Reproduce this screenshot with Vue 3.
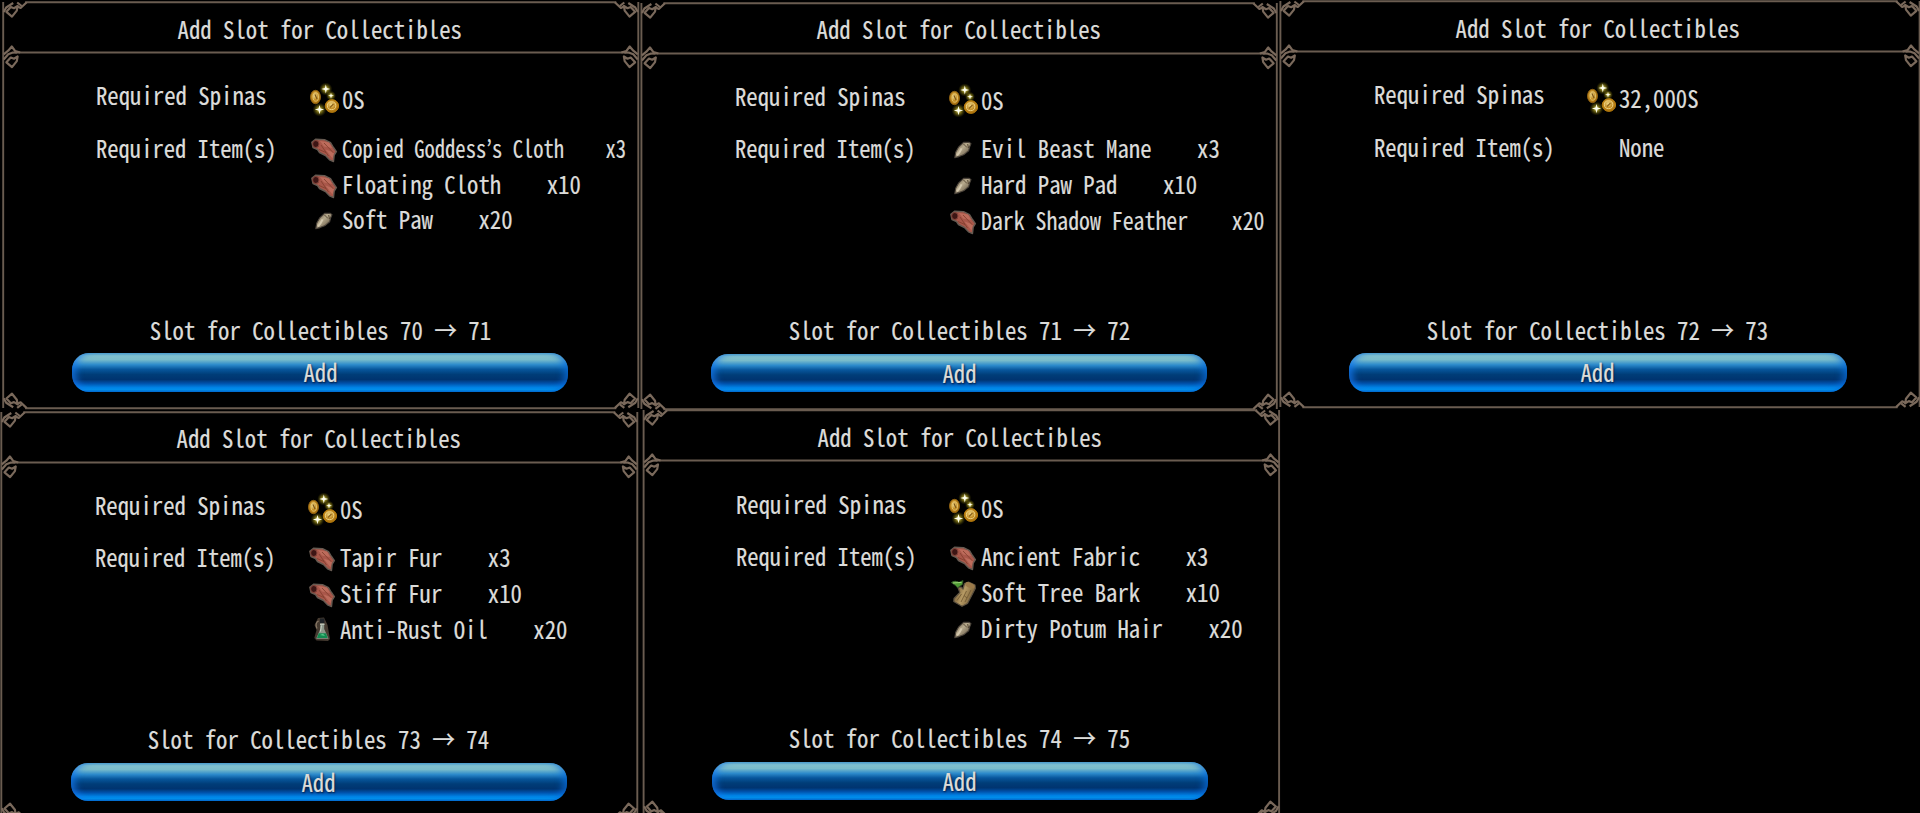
<template>
  <div class="board">
    <svg class="defs" width="0" height="0">
      <defs>
        <g id="loop">
          <path d="M3.2 9.8 L7.6 5 L10.8 6.2 L14.4 4 L13.6 8.6 L8.8 14.6 Z" />
        </g>
        <g id="corner">
          <use href="#loop" />
          <path d="M0.5 10 L3 5.5 L10 1" />
          <path d="M13.5 4 L17.4 6 L23.5 0.2" />
          <path d="M14 0.5 L18.5 4" />
        </g>
        <g id="joint">
          <use href="#loop" />
          <path d="M0.5 1.8 L5 -1.8 L8.6 -6 L12 -1.4 L17 0" />
          <path d="M0.5 7 L5 1.8 L9 0.2 L14 0" />
        </g>
        <radialGradient id="gold" cx="0.45" cy="0.4" r="0.6">
          <stop offset="0" stop-color="#f2dc8c" />
          <stop offset="0.5" stop-color="#c58f26" />
          <stop offset="1" stop-color="#a96f0c" />
        </radialGradient>
        <radialGradient id="glow">
          <stop offset="0" stop-color="#ffff9c" stop-opacity="0.95" />
          <stop offset="0.45" stop-color="#b5a520" stop-opacity="0.6" />
          <stop offset="1" stop-color="#6b6000" stop-opacity="0" />
        </radialGradient>
        <linearGradient id="bone" x1="0" y1="0.2" x2="0.8" y2="1">
          <stop offset="0" stop-color="#6a5c4a" />
          <stop offset="0.4" stop-color="#b8ab8e" />
          <stop offset="1" stop-color="#5c4f3d" />
        </linearGradient>
        <linearGradient id="wood" x1="0" y1="0.3" x2="1" y2="0.7">
          <stop offset="0" stop-color="#6d5530" />
          <stop offset="0.45" stop-color="#b69a64" />
          <stop offset="1" stop-color="#6a512d" />
        </linearGradient>
      </defs>
    </svg>

    <div v-for="(row, r) in rows" :key="r" class="row">
      <section v-for="panel in row" :key="panel.from" :class="['panel', 'panel-' + panel.from]">
        <svg class="frame" width="644" height="412">
          <path :d="framePath(panel)" />
          <g class="ornament">
            <use href="#corner" :transform="`translate(${panel.left} 2)`" />
            <use href="#corner" :transform="`translate(${panel.right} 2) scale(-1 1)`" />
            <use href="#joint" :transform="`translate(${panel.left} 52.5)`" />
            <use href="#joint" :transform="`translate(${panel.right} 52.5) scale(-1 1)`" />
            <use href="#corner" :transform="`translate(${panel.left} 408.3) scale(1 -1)`" />
            <use href="#corner" :transform="`translate(${panel.right} 408.3) scale(-1 -1)`" />
          </g>
        </svg>

        <h2 class="title"><span class="text">Add Slot for Collectibles</span></h2>

        <div class="spinas">
          <span class="label text">Required Spinas</span>
          <div class="value">
            <svg class="icon" viewBox="0 0 34 36">
              <ellipse cx="7.5" cy="17" rx="5" ry="6.7" fill="url(#gold)" stroke="#8d6012" />
              <ellipse cx="7.8" cy="17" rx="2.7" ry="4.2" fill="none" stroke="#e6cb7c" stroke-width="0.8" />
              <path d="M7 14.5 L9 19" stroke="#7b551a" stroke-width="1.2" />
              <ellipse cx="23.9" cy="26" rx="6.7" ry="6.4" fill="url(#gold)" stroke="#b57a0a" />
              <ellipse cx="23.6" cy="25.7" rx="4.2" ry="3.9" fill="none" stroke="#f0d98c" stroke-width="0.9" />
              <path d="M22 27.5 L25.5 24" stroke="#8b611a" stroke-width="1.3" />
              <circle cx="17.8" cy="9" r="6.6" fill="url(#glow)" />
              <circle cx="23" cy="15.7" r="5" fill="url(#glow)" />
              <circle cx="11.5" cy="29.6" r="7" fill="url(#glow)" />
              <path class="spark" d="M17.8 4.5 L18.7 8.1 L22.3 9 L18.7 9.9 L17.8 13.5 L16.9 9.9 L13.3 9 L16.9 8.1 Z" />
              <path class="spark" d="M23 12.7 L23.6 15.1 L26 15.7 L23.6 16.3 L23 18.7 L22.4 16.3 L20 15.7 L22.4 15.1 Z" />
              <path class="spark" d="M11.5 24.9 L12.5 28.6 L16.2 29.6 L12.5 30.6 L11.5 34.3 L10.5 30.6 L6.8 29.6 L10.5 28.6 Z" />
            </svg>
            <span class="text">{{ panel.spinas }}S</span>
          </div>
        </div>

        <div class="items">
          <span class="label text">Required Item(s)</span>
          <ul class="list">
            <li v-if="!panel.items.length" class="value none"><span class="text">None</span></li>
            <li v-for="item in panel.items" :key="item.name" class="value">
              <svg class="icon" viewBox="0 0 34 36">
                <template v-if="item.icon === 'cloth'">
                  <path d="M3.8 12.2 L7.5 9.2 L16.5 9.6 L22.5 12.7 L25.5 17.5 L28.4 21.6 L26.2 25 L25.5 31.5 L21.5 29.8 L17.5 25.5 L11.5 22.5 L9.5 19.5 L5 17.6 Z" fill="#a9574a" stroke="#665a51" stroke-width="1.4" stroke-linejoin="round" />
                  <path d="M12 11 L21 12.5 L24 18 L16 16.5 Z M17.5 19.5 L26 22.5 L24.5 28.5 Z" fill="#bd6c5c" />
                  <path d="M13 15 L20.5 26 M16 13 L25.5 23 M11 19.5 L18 22.5" fill="none" stroke="#84402f" stroke-width="0.9" />
                  <ellipse cx="7.8" cy="14" rx="3.2" ry="3.5" fill="#3d1514" stroke="#84443a" />
                </template>
                <template v-else-if="item.icon === 'paw'">
                  <path d="M24 13.6 L22 12.2 L16.6 12.4 L11.8 16.8 L8.8 22 L7.8 27.6 L12 26.6 L17.2 24.4 L21.6 20.8 L22.6 17 Z" fill="url(#bone)" stroke="#4c443b" stroke-width="1.1" stroke-linejoin="round" />
                  <path d="M10 25.4 Q12.8 22.6 14.6 18.4" fill="none" stroke="#d3c8ae" stroke-width="2" />
                  <path d="M16.5 14 L20 17.5 M20.6 14 L21.6 18" fill="none" stroke="#51432f" stroke-width="0.9" />
                </template>
                <template v-else-if="item.icon === 'flask'">
                  <path d="M12 7 L18 6.5 L21.5 14 L24 28 L22 30 L10.5 29.5 L8.3 27 L10.5 19 L8.5 14 Z" fill="#453a30" />
                  <path d="M12.6 10 Q8.6 12 11 17.5" fill="none" stroke="#8a7b68" stroke-width="1.1" />
                  <path d="M14.3 12.5 H18.2 V18 L22.6 27.8 H10.2 L14.3 18 Z" fill="#8d988b" />
                  <path d="M12.7 22.2 H20 L21.7 26.9 H11 Z" fill="#128a50" />
                  <path d="M14 24 L17 22.8 L19 25 Z" fill="#52c886" />
                  <path d="M14 7.5 H18.4 V12 H14 Z" fill="#1e2226" />
                  <path d="M14 13.3 H18.5" stroke="#c3c9bd" stroke-width="1.2" />
                  <path d="M15.4 14.5 L14.5 20.5" stroke="#d5dccf" stroke-width="0.9" />
                </template>
                <template v-else>
                  <path d="M17.5 9.5 L21.5 8 L28 11 L28.3 14.5 L20.5 29.5 L15 32.3 L6.8 27.6 L7 24.5 L12.8 18.5 L11 13.5 L14 13 L16 15 Z" fill="url(#wood)" stroke="#5c5140" stroke-width="1.2" stroke-linejoin="round" />
                  <ellipse cx="23" cy="11.3" rx="5" ry="2.6" fill="#9b7a4a" transform="rotate(22 23 11.3)" />
                  <path d="M14.5 20 L10 26.5 M19.5 17 L14 28 M24 16 L18 28 M17 21.5 L20 24" fill="none" stroke="#6d5530" stroke-width="0.8" />
                  <path d="M4.3 8.6 Q8 5.8 12 8.3 L16 6.5 L15.4 10.5 L10.5 13.8 L8.6 11.6 Z" fill="#4e9a33" stroke="#33552a" stroke-width="0.8" />
                  <path d="M6 9 L14.5 8.4" stroke="#9bd375" stroke-width="1" />
                </template>
              </svg>
              <span class="text" :style="{ transform: `scaleX(${fit(item)})` }">{{ line(item) }}</span>
            </li>
          </ul>
        </div>

        <p class="slots"><span class="text">Slot for Collectibles {{ panel.from }} → {{ panel.from + 1 }}</span></p>
        <button class="add"><span class="text">Add</span></button>
      </section>
    </div>
  </div>
</template>

<script setup>
const rows = [
  [
    {
      from: 70, spinas: '0', left: 3.2, right: 638.3,
      items: [
        { icon: 'cloth', name: 'Copied Goddess’s Cloth', count: 3 },
        { icon: 'cloth', name: 'Floating Cloth', count: 10 },
        { icon: 'paw', name: 'Soft Paw', count: 20 }
      ]
    },
    {
      from: 71, spinas: '0', left: 2.4, right: 637.8,
      items: [
        { icon: 'paw', name: 'Evil Beast Mane', count: 3 },
        { icon: 'paw', name: 'Hard Paw Pad', count: 10 },
        { icon: 'cloth', name: 'Dark Shadow Feather', count: 20 }
      ]
    },
    { from: 72, spinas: '32,000', left: 2.4, right: 641.6, items: [] }
  ],
  [
    {
      from: 73, spinas: '0', left: 2.3, right: 638.3,
      items: [
        { icon: 'cloth', name: 'Tapir Fur', count: 3 },
        { icon: 'cloth', name: 'Stiff Fur', count: 10 },
        { icon: 'flask', name: 'Anti-Rust Oil', count: 20 }
      ]
    },
    {
      from: 74, spinas: '0', left: 3.6, right: 639.1,
      items: [
        { icon: 'cloth', name: 'Ancient Fabric', count: 3 },
        { icon: 'bark', name: 'Soft Tree Bark', count: 10 },
        { icon: 'paw', name: 'Dirty Potum Hair', count: 20 }
      ]
    }
  ]
];

const CELL = 12.3;
const MAX_WIDTH = 283.5;

const line = (item) => `${item.name}    x${item.count}`;

// long lines are squeezed so they stay inside the window,
// the curly apostrophe is narrower than a full cell
const fit = (item) => {
  const text = line(item);
  const cells = text.length - (text.includes('’') ? 0.5 : 0);
  return Math.min(0.925, MAX_WIDTH / (cells * CELL));
};

const framePath = ({ left, right }) =>
  `M${left} 2 V408 M${right} 2 V408 ` +
  `M${left + 22} 2.2 H${right - 22} M${left + 12} 52.5 H${right - 12} M${left + 22} 408.3 H${right - 22}`;
</script>

<style>
body {
    background: #000;
}
</style>

<style scoped>
.board {
    width: 1920px;
    height: 813px;
    overflow: hidden;
    background: #000;
    color: #dcdcda;
    font-family: "Noto Sans CJK JP", "Liberation Mono", monospace;
    font-feature-settings: "hwid", "liga" 0;
    font-size: 24.6px;
    line-height: 36px;
    -webkit-text-stroke: 0.2px #dcdcda;
}

.defs {
    position: absolute;
}

.row {
    display: flex;
    align-items: flex-start;
    height: 409px;
}

.panel {
    position: relative;
    flex: none;
    display: flex;
    flex-direction: column;
    width: 640px;
    height: 409px;
}

.panel-71 {
    margin: 0.5px 0 0 -1px;
}

.panel-72 {
    margin: -0.8px 0 0 -1.5px;
}

.panel-73 {
    margin: 0.5px 0 0 -1.5px;
}

.panel-74 {
    margin: -0.6px 0 0 1.1px;
}

.frame {
    position: absolute;
    top: 0;
    left: 0;
    fill: none;
    stroke: #6a5c50;
    stroke-width: 1.9;
    overflow: visible;
}

.ornament {
    stroke: #7a695b;
    stroke-width: 2.2;
    stroke-linejoin: round;
}

.text {
    display: inline-block;
    white-space: pre;
    transform: scaleX(0.925);
    transform-origin: left center;
}

.title {
    margin: 9.6px 0 0;
    font-size: inherit;
    font-weight: 400;
    text-align: center;
}

.title .text,
.slots .text,
.add .text {
    transform-origin: center;
}

.spinas {
    display: flex;
    margin-top: 30.7px;
    height: 53.7px;
    padding-left: 96px;
}

.items {
    display: flex;
    height: 180.6px;
    padding-left: 96px;
    line-height: 35.7px;
}

.label {
    flex: none;
}

.label.text {
    width: 229.7px;
    margin-right: -18px;
}

.items .label {
    transform: scaleX(0.918);
}

.spinas .value {
    margin-top: 4px;
}

.list {
    margin: 0;
    padding: 0;
    list-style: none;
}

.value {
    display: flex;
    height: 35.7px;
}

.value.none {
    padding-left: 34px;
}

.icon {
    flex: none;
    width: 34px;
    height: 36px;
}

.spark {
    fill: #fffff0;
}

.slots {
    margin: 0;
    text-align: center;
}

.add {
    flex: none;
    width: 496px;
    height: 38.4px;
    margin: 6.7px 0 0 72px;
    padding: 0 0 2.4px;
    border: 0;
    border-radius: 17px;
    background: linear-gradient(#5fa9c4 0%, #86c4cc 7%, #79bccb 17%, #2c8acb 30%, #07569c 42%, #003d78 55%, #003470 68%, #0052ac 78%, #0083e4 88%, #0092ec 94%, #0064c4 100%);
    box-shadow: inset 7px 0 7px -3px rgba(20, 120, 240, 0.75), inset -7px 0 7px -3px rgba(10, 110, 220, 0.75);
    color: inherit;
    font: inherit;
    font-feature-settings: inherit;
    text-shadow: 1px 1px 2px #001c40;
}

.panel-72 .slots {
    margin-top: 0.8px;
}

.panel-72 .add {
    width: 498px;
    margin-left: 71.4px;
}
</style>
